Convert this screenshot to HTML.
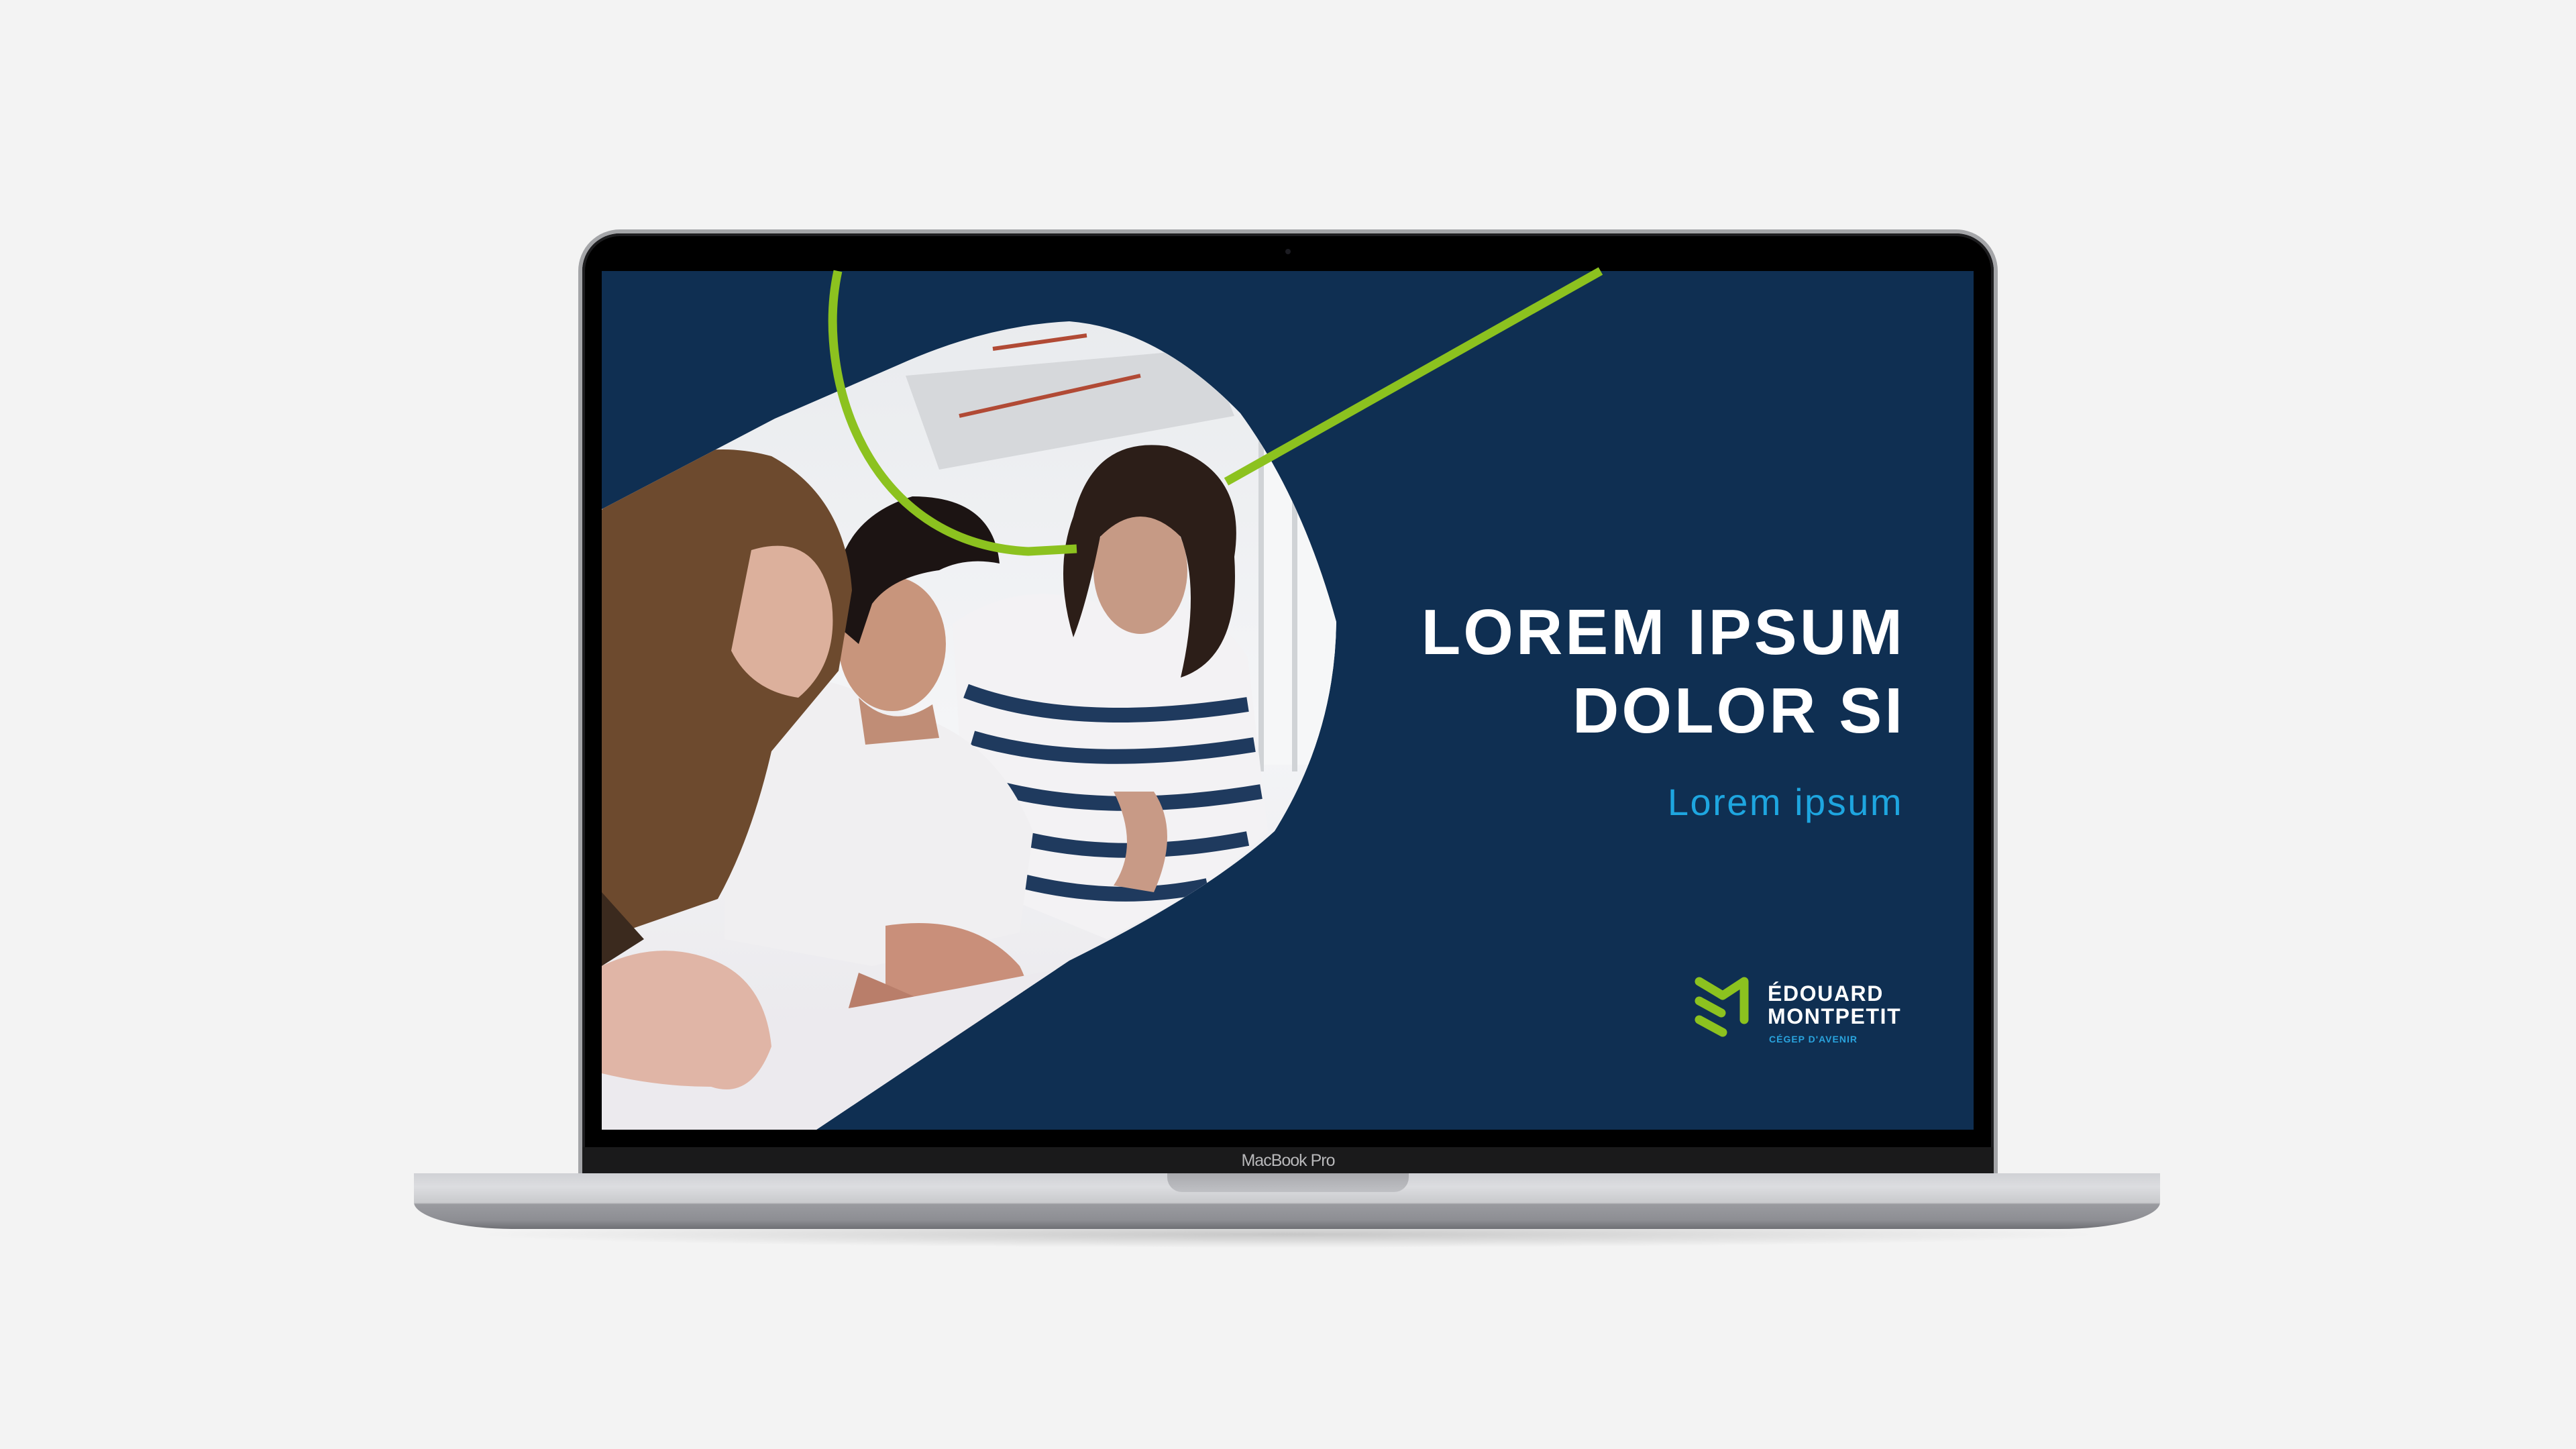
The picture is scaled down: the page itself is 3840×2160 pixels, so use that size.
<!DOCTYPE html>
<html><head><meta charset="utf-8"><style>
html,body{margin:0;padding:0}
body{width:3840px;height:2160px;background:#f3f3f3;position:relative;overflow:hidden;font-family:"Liberation Sans",sans-serif}
.lid{position:absolute;left:862px;top:342px;width:2116px;height:1408px;border-radius:62px 62px 0 0;background:#a4a5a8;}
.lid2{position:absolute;left:868px;top:348px;width:2104px;height:1402px;border-radius:56px 56px 0 0;background:#000;box-shadow:inset 0 0 0 4px #1e1e20}
.chin{position:absolute;left:868px;top:1710px;width:2104px;height:40px;background:#1a1a1b}
.screen{position:absolute;left:897px;top:404px;width:2045px;height:1280px;background:#0f2f52;overflow:hidden}
.base{position:absolute;left:617px;top:1749px;width:2603px;height:83px;border-radius:0 0 150px 150px/0 0 40px 40px;background:linear-gradient(#d0d1d5 0,#dcdde0 20px,#c9cacd 44px,#9a9ba0 46px,#8d8e93 70px,#6e6f74 83px)}
.shadow{position:absolute;left:700px;top:1820px;width:2440px;height:40px;border-radius:50%;background:radial-gradient(ellipse at center,rgba(0,0,0,.18),rgba(0,0,0,0) 70%)}
.notch{position:absolute;left:1740px;top:1749px;width:360px;height:28px;border-radius:0 0 22px 22px;background:linear-gradient(#a9aaae,#bfc0c4)}
.mbp{position:absolute;left:1790px;top:1716px;width:260px;text-align:center;color:#b8b8ba;font-size:25px;letter-spacing:-1px}
.t{position:absolute;color:#fff;font-weight:bold;font-size:96px;right:1004px;text-align:right;white-space:nowrap;letter-spacing:4px;line-height:1}
</style></head><body>
<div class="shadow"></div>
<div class="lid"></div><div class="lid2"></div>
<div class="chin"></div>
<div style="position:absolute;left:1916px;top:371px;width:8px;height:8px;border-radius:50%;background:#1c1c22"></div>
<div class="screen"></div>
<svg style="position:absolute;left:0;top:0" width="3840" height="2160" viewBox="0 0 3840 2160">
<defs>
<clipPath id="blob"><path d="M897 759 L1155 624 L1339 544 Q1470 485 1594 479 Q1727 490 1849 616 Q1941 742 1992 927 Q1990 1095 1900 1239 Q1800 1330 1594 1432 L1217 1684 L897 1684 Z"/></clipPath>
<linearGradient id="bg" x1="0" y1="0" x2="0" y2="1"><stop offset="0" stop-color="#e9ebee"/><stop offset=".5" stop-color="#f4f5f7"/><stop offset="1" stop-color="#e8e6ea"/></linearGradient>
</defs>
<g clip-path="url(#blob)">
<rect x="897" y="470" width="1100" height="1220" fill="url(#bg)"/>
<path d="M1350 560 L1800 520 L1840 620 L1400 700 Z" fill="#d6d8db"/>
<path d="M1480 520 L1620 500 M1430 620 L1700 560" stroke="#b14a35" stroke-width="6"/>
<rect x="1880" y="640" width="120" height="500" fill="#f6f7f8"/>
<path d="M1880 640 V1150 M1930 640 V1150" stroke="#d0d3d6" stroke-width="8"/>
<path d="M1420 930 Q1520 860 1640 900 Q1800 880 1860 980 L1890 1240 L1800 1320 L1650 1400 L1480 1330 L1430 1100 Z" fill="#f3f2f4"/>
<g stroke="#1f3a5e" stroke-width="22" fill="none">
<path d="M1440 1030 Q1600 1090 1860 1050"/><path d="M1450 1100 Q1620 1150 1870 1110"/><path d="M1470 1170 Q1640 1220 1880 1180"/><path d="M1490 1240 Q1650 1290 1860 1250"/><path d="M1510 1310 Q1660 1350 1800 1320"/>
</g>
<ellipse cx="1700" cy="850" rx="70" ry="95" fill="#c69a85"/>
<path d="M1600 770 Q1630 650 1740 665 Q1860 700 1840 830 Q1850 980 1760 1010 Q1790 880 1760 800 Q1700 740 1640 800 Q1620 900 1600 950 Q1570 850 1600 770Z" fill="#2c1e18"/>
<path d="M1660 1180 Q1700 1260 1660 1320 L1720 1330 Q1760 1240 1720 1180Z" fill="#c89a86"/>
<path d="M1080 1020 Q1200 980 1340 1060 Q1480 1090 1540 1240 L1520 1390 L1300 1440 L1080 1400 Z" fill="#f0eff1"/>
<ellipse cx="1330" cy="960" rx="80" ry="100" fill="#c8957c"/>
<path d="M1245 930 Q1230 780 1360 740 Q1480 740 1490 840 Q1440 830 1400 850 Q1330 860 1300 900 L1280 960 Z" fill="#1c1413"/>
<path d="M1280 1040 Q1330 1090 1390 1050 L1400 1100 L1290 1110Z" fill="#c08d76"/>
<path d="M1320 1380 Q1450 1360 1520 1440 Q1560 1520 1500 1560 Q1400 1500 1320 1470Z" fill="#c98f7a"/>
<path d="M1280 1450 Q1450 1520 1540 1580 L1500 1600 Q1380 1560 1260 1520Z" fill="#b97e6a"/>
<path d="M897 1560 Q1200 1520 1600 1440 L1700 1440 L1217 1684 L897 1684Z" fill="#eceaee"/>
<path d="M897 760 Q1000 640 1150 680 Q1260 740 1270 880 L1250 1000 L1150 1120 Q1120 1250 1070 1340 L897 1400Z" fill="#6d4a2e"/>
<path d="M1120 820 Q1220 790 1240 900 Q1250 990 1190 1040 Q1120 1030 1090 970 Z" fill="#dcb09c"/>
<path d="M897 1440 Q980 1400 1060 1430 Q1140 1460 1150 1560 Q1120 1640 1060 1620 Q980 1620 897 1600Z" fill="#e0b5a6"/>
<path d="M897 1330 L897 1440 L960 1400 Z" fill="#3b2a1e"/>
</g>
<path d="M1249 404 C1215 560 1290 810 1533 822 L1605 818" fill="none" stroke="#8cc21f" stroke-width="13"/>
<path d="M1828 718 L2386 404" fill="none" stroke="#8cc21f" stroke-width="13"/>
<g stroke="#8cc21f" stroke-width="13" stroke-linecap="round" stroke-linejoin="round" fill="none">
<path d="M2533 1463 L2568 1484 L2600 1463 L2600 1520"/>
<path d="M2533 1492 L2566 1510"/>
<path d="M2533 1520 L2568 1539"/>
</g>
</svg>
<div class="t" style="top:895px;right:1000px">LOREM IPSUM</div>
<div class="t" style="top:1012px;right:1000px">DOLOR SI</div>
<div style="position:absolute;right:1003px;top:1168px;color:#1ea6e0;font-size:56px;letter-spacing:2.5px;white-space:nowrap;line-height:1">Lorem ipsum</div>
<div style="position:absolute;left:2635px;top:1464px;color:#fff;font-weight:bold;font-size:32px;line-height:34px;letter-spacing:1.6px;white-space:nowrap">ÉDOUARD<br>MONTPETIT</div>
<div style="position:absolute;left:2637px;top:1541px;color:#29a3dd;font-weight:bold;font-size:14px;letter-spacing:1px;white-space:nowrap">CÉGEP D'AVENIR</div>
<div class="base"></div>
<div class="notch"></div>
<div class="mbp">MacBook Pro</div>
</body></html>
